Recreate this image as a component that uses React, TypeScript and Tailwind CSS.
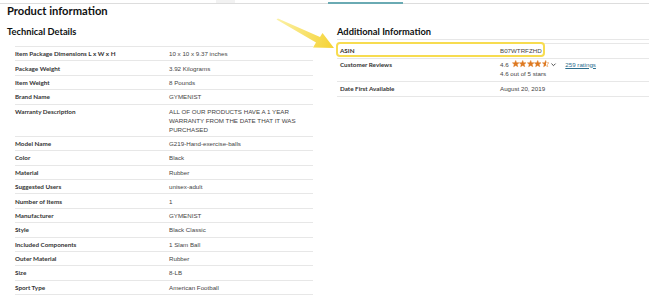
import React from 'react';

const techDetails: [string, string][] = [
  ['Item Package Dimensions L x W x H', '10 x 10 x 9.37 inches'],
  ['Package Weight', '3.92 Kilograms'],
  ['Item Weight', '8 Pounds'],
  ['Brand Name', 'GYMENIST'],
  ['Warranty Description', 'ALL OF OUR PRODUCTS HAVE A 1 YEAR WARRANTY FROM THE DATE THAT IT WAS PURCHASED'],
  ['Model Name', 'G219-Hand-exercise-balls'],
  ['Color', 'Black'],
  ['Material', 'Rubber'],
  ['Suggested Users', 'unisex-adult'],
  ['Number of Items', '1'],
  ['Manufacturer', 'GYMENIST'],
  ['Style', 'Black Classic'],
  ['Included Components', '1 Slam Ball'],
  ['Outer Material', 'Rubber'],
  ['Size', '8-LB'],
  ['Sport Type', 'American Football'],
];

const Star = ({ half }: { half?: boolean }) => (
  <svg width="7.4" height="7.4" viewBox="0 0 24 24">
    <defs>
      <linearGradient id="halfStar">
        <stop offset="50%" stopColor="#de7921" />
        <stop offset="50%" stopColor="#ffffff" />
      </linearGradient>
    </defs>
    <path
      d="M12 1.5l3.1 7.1 7.6.6-5.8 5 1.8 7.5L12 17.7l-6.7 4 1.8-7.5-5.8-5 7.6-.6z"
      fill={half ? 'url(#halfStar)' : '#de7921'}
      stroke="#de7921"
      strokeWidth="1.5"
    />
  </svg>
);

const labelCls = "font-['Lato',sans-serif] font-bold text-[6.3px] text-[#333]";
const valueCls = "font-['Liberation_Sans',Arial,sans-serif] text-[6.2px] text-[#444]";
const headCls = "font-['Lato',sans-serif] font-bold text-[#0f1111]";

const App = () => {
  return (
    <div className="relative w-[670px] h-[304px] overflow-hidden bg-white">
      {/* tab strip */}
      <div className="flex items-end w-[649px] h-[4px] border-b border-[#dddddd]">
        <div className="ml-[216px] w-[19px] h-[3px] bg-[#f2f2f2]" />
        <div className="ml-[93px] w-[75px] h-[2px] -mb-px bg-[#6aaab3]" />
      </div>

      <h1 className={`pl-[7px] h-[13px] text-[11.2px] leading-[13px] ${headCls}`}>Product information</h1>

      <div className="flex">
        {/* left column */}
        <div className="w-[313px] pl-[7px]">
          <h2 className={`h-[29px] flex items-center text-[9.3px] ${headCls}`}>Technical Details</h2>
          <div className="ml-[8px] w-[298px] border-b border-[#e7e7e7]">
            {techDetails.map(([k, v]) => (
              <div key={k} className="flex border-t border-[#e7e7e7] py-[2.2px] leading-[9px]">
                <div className={`w-[154px] shrink-0 ${labelCls}`}>{k}</div>
                <div className={`w-[132px] ${valueCls}`}>{v}</div>
              </div>
            ))}
          </div>
        </div>

        {/* right column */}
        <div className="ml-[24px] w-[312px]">
          <h2 className={`h-[23px] pt-[10px] border-b border-[#e7e7e7] text-[9.3px] leading-[10px] ${headCls}`}>
            Additional Information
          </h2>
          <div className="mt-[3px] border-b border-[#e7e7e7]">
            <div className="relative flex h-[15px] border-t border-[#e7e7e7] pt-[2px] leading-[9px]">
              <div className={`w-[163px] pl-[3px] ${labelCls}`}>ASIN</div>
              <div className={valueCls}>B07WTRFZHD</div>
              <div className="absolute left-[-1px] top-[-2px] w-[209px] h-[15px] border-2 border-[#f7dc50] rounded-[4px]" />
            </div>
            <div className="flex h-[23px] border-t border-[#e7e7e7] pt-[0.5px] leading-[9px]">
              <div className={`w-[163px] pl-[3px] ${labelCls}`}>Customer Reviews</div>
              <div className={valueCls}>
                <div className="flex items-center h-[9px]">
                  <span className="mr-[3px]">4.6</span>
                  <span className="flex gap-[0.2px]">
                    <Star />
                    <Star />
                    <Star />
                    <Star />
                    <Star half />
                  </span>
                  <svg width="7" height="7" viewBox="0 0 24 24" className="ml-[1px]">
                    <path d="M5 9l7 7 7-7" fill="none" stroke="#333" strokeWidth="3" />
                  </svg>
                  <span className="ml-[8px] text-[#2d6e8e] underline">259 ratings</span>
                </div>
                <div>4.6 out of 5 stars</div>
              </div>
            </div>
            <div className="flex h-[15px] border-t border-[#e7e7e7] pt-[2px] leading-[9px]">
              <div className={`w-[163px] pl-[3px] ${labelCls}`}>Date First Available</div>
              <div className={valueCls}>August 20, 2019</div>
            </div>
          </div>
        </div>
      </div>

      {/* callout arrow */}
      <svg className="absolute left-0 top-0 pointer-events-none" width="670" height="304">
        <defs>
          <linearGradient id="arrowGrad" x1="277" y1="20" x2="334" y2="48" gradientUnits="userSpaceOnUse">
            <stop offset="0%" stopColor="#fbf1a6" />
            <stop offset="100%" stopColor="#f5d232" />
          </linearGradient>
        </defs>
        <path d="M276.5 19.5 L278 18.5 L320 37 L322.5 33 L334 48 L313 47.5 L316 42.5 Z" fill="url(#arrowGrad)" />
      </svg>
    </div>
  );
};

export default App;
